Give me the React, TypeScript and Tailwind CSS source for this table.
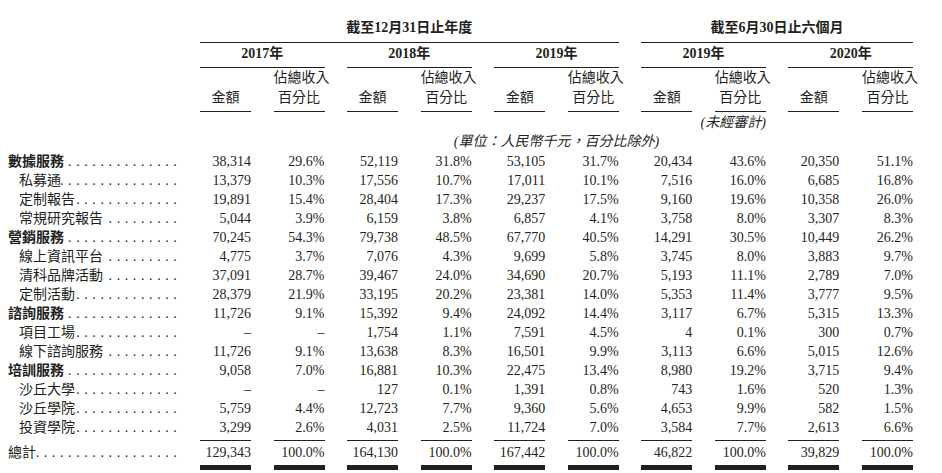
import React from "react";

type Row = { label: string; bold?: boolean; v: string[] };

const ROWS: Row[] = [
  { label: "數據服務", bold: true, v: ["38,314", "29.6%", "52,119", "31.8%", "53,105", "31.7%", "20,434", "43.6%", "20,350", "51.1%"] },
  { label: "私募通", v: ["13,379", "10.3%", "17,556", "10.7%", "17,011", "10.1%", "7,516", "16.0%", "6,685", "16.8%"] },
  { label: "定制報告", v: ["19,891", "15.4%", "28,404", "17.3%", "29,237", "17.5%", "9,160", "19.6%", "10,358", "26.0%"] },
  { label: "常規研究報告", v: ["5,044", "3.9%", "6,159", "3.8%", "6,857", "4.1%", "3,758", "8.0%", "3,307", "8.3%"] },
  { label: "營銷服務", bold: true, v: ["70,245", "54.3%", "79,738", "48.5%", "67,770", "40.5%", "14,291", "30.5%", "10,449", "26.2%"] },
  { label: "線上資訊平台", v: ["4,775", "3.7%", "7,076", "4.3%", "9,699", "5.8%", "3,745", "8.0%", "3,883", "9.7%"] },
  { label: "清科品牌活動", v: ["37,091", "28.7%", "39,467", "24.0%", "34,690", "20.7%", "5,193", "11.1%", "2,789", "7.0%"] },
  { label: "定制活動", v: ["28,379", "21.9%", "33,195", "20.2%", "23,381", "14.0%", "5,353", "11.4%", "3,777", "9.5%"] },
  { label: "諮詢服務", bold: true, v: ["11,726", "9.1%", "15,392", "9.4%", "24,092", "14.4%", "3,117", "6.7%", "5,315", "13.3%"] },
  { label: "項目工場", v: ["–", "–", "1,754", "1.1%", "7,591", "4.5%", "4", "0.1%", "300", "0.7%"] },
  { label: "線下諮詢服務", v: ["11,726", "9.1%", "13,638", "8.3%", "16,501", "9.9%", "3,113", "6.6%", "5,015", "12.6%"] },
  { label: "培訓服務", bold: true, v: ["9,058", "7.0%", "16,881", "10.3%", "22,475", "13.4%", "8,980", "19.2%", "3,715", "9.4%"] },
  { label: "沙丘大學", v: ["–", "–", "127", "0.1%", "1,391", "0.8%", "743", "1.6%", "520", "1.3%"] },
  { label: "沙丘學院", v: ["5,759", "4.4%", "12,723", "7.7%", "9,360", "5.6%", "4,653", "9.9%", "582", "1.5%"] },
  { label: "投資學院", v: ["3,299", "2.6%", "4,031", "2.5%", "11,724", "7.0%", "3,584", "7.7%", "2,613", "6.6%"] },
];

const TOTAL = ["129,343", "100.0%", "164,130", "100.0%", "167,442", "100.0%", "46,822", "100.0%", "39,829", "100.0%"];
const YEARS = ["2017年", "2018年", "2019年", "2019年", "2020年"];
const DOTS = ".".repeat(40);

function Label({ text, bold, indent }: { text: string; bold?: boolean; indent?: boolean }) {
  return (
    <div className={`flex h-[19px] items-center whitespace-nowrap ${indent ? "pl-[19px]" : "pl-2"}`}>
      <span className={bold ? "font-bold" : ""}>{text}</span>
      {/* leaders, right-aligned so the dots line up row to row */}
      <span className="-mr-[4px] flex min-w-0 flex-1 justify-end overflow-hidden">
        <span className="tracking-[4.6px]">{DOTS}</span>
      </span>
    </div>
  );
}

export default function App() {
  return (
    <div className="h-[473px] w-[942px] overflow-hidden bg-white text-[14px] text-[#231f20] [font-family:'Liberation_Serif','Noto_Sans_CJK_TC',serif]">
      <div className="grid grid-cols-[177.45px_repeat(10,51px)] gap-x-[22.55px]">
        {/* period headers */}
        <div />
        <div className="col-span-6 border-b border-[#231f20] pt-[19px] pb-[5px] text-center font-bold leading-[18px]">
          截至12月31日止年度
        </div>
        <div className="col-span-4 border-b border-[#231f20] pt-[19px] pb-[5px] text-center font-bold leading-[18px]">
          截至6月30日止六個月
        </div>

        {/* years */}
        <div />
        {YEARS.map((y, i) => (
          <div key={i} className="col-span-2 border-b border-[#231f20] pt-[2px] pb-[4px] text-center font-bold leading-[18px]">
            {y}
          </div>
        ))}

        {/* column titles */}
        <div />
        {YEARS.map((_, i) => (
          <React.Fragment key={i}>
            <div className="flex flex-col justify-end border-b border-[#231f20] pb-[3px] text-center leading-[20px]">
              <span>金額</span>
            </div>
            <div className="flex flex-col justify-end border-b border-[#231f20] pb-[3px] text-center leading-[20px] whitespace-nowrap">
              <span>佔總收入</span>
              <span>百分比</span>
            </div>
          </React.Fragment>
        ))}

        {/* unaudited note */}
        <div className="col-span-7" />
        <div className="col-span-2 flex justify-end whitespace-nowrap pt-[2px] pr-[0px] italic leading-[18px]">
          (未經審計)
        </div>
        <div className="col-span-2" />

        {/* unit note */}
        <div className="col-span-5" />
        <div className="col-span-2 mb-[1px] flex justify-center whitespace-nowrap pt-[1px] italic leading-[18px]">
          (單位：人民幣千元，百分比除外)
        </div>
        <div className="col-span-4" />

        {/* body */}
        {ROWS.map((r) => (
          <React.Fragment key={r.label}>
            <Label text={r.label} bold={r.bold} indent={!r.bold} />
            {r.v.map((c, j) => (
              <div key={j} className="h-[19px] text-right leading-[19px] whitespace-nowrap">
                {c}
              </div>
            ))}
          </React.Fragment>
        ))}

        {/* total */}
        <div className="mt-[3px] pt-[3px]">
          <Label text="總計" />
        </div>
        {TOTAL.map((c, j) => (
          <div key={j} className="mt-[3px] border-t border-[#231f20] pt-[2px] text-right leading-[19px] whitespace-nowrap">
            {c}
          </div>
        ))}
        <div />
        {TOTAL.map((_, j) => (
          <div key={j} className="mt-[3px] h-[5px] bg-[#231f20]" />
        ))}
      </div>
    </div>
  );
}
